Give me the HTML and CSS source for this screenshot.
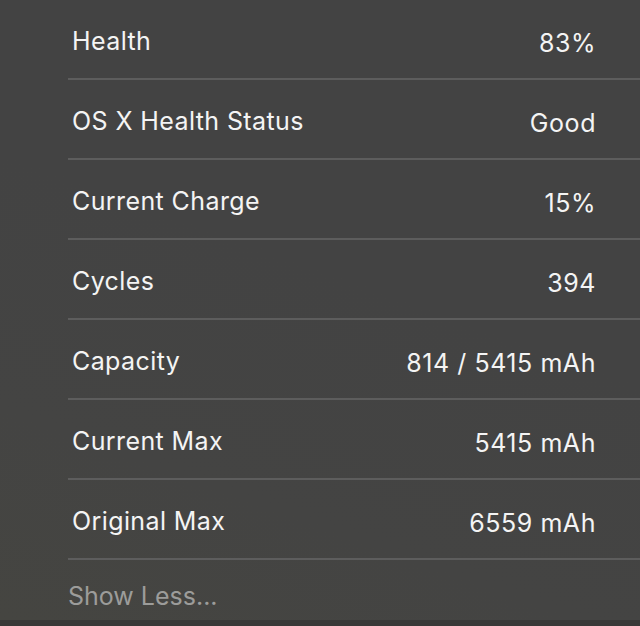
FILE: index.html
```html
<!DOCTYPE html>
<html>
<head>
	<title>Battery</title>
	<meta charset="utf-8">
	<link rel="stylesheet" href="styles.css">
</head>
<body>
	<div class="panel">
		<div class="list">
			<div class="row"><span class="label">Health</span><span class="value">83%</span></div>
			<div class="row"><span class="label">OS X Health Status</span><span class="value">Good</span></div>
			<div class="row"><span class="label">Current Charge</span><span class="value">15%</span></div>
			<div class="row"><span class="label">Cycles</span><span class="value">394</span></div>
			<div class="row"><span class="label">Capacity</span><span class="value">814 / 5415 mAh</span></div>
			<div class="row"><span class="label">Current Max</span><span class="value">5415 mAh</span></div>
			<div class="row"><span class="label">Original Max</span><span class="value">6559 mAh</span></div>
		</div>
		<a class="toggle">Show Less...</a>
	</div>
	<div class="footer"></div>
</body>
</html>
```

FILE: styles.css
```css
html, body {
	margin: 0;
	height: 100%;
}

body {
	background: #434343;
	font-family: "Inter", "Liberation Sans", sans-serif;
	color: #f4f4f4;
	display: flex;
	flex-direction: column;
	overflow: hidden;
}

.panel {
	flex: 1;
	padding-left: 68px;
	background: linear-gradient(20deg, #454541 0%, #444443 25%, #434343 55%);
}

.row {
	display: flex;
	justify-content: space-between;
	align-items: flex-start;
	height: 80px;
	box-sizing: border-box;
	padding: 26px 44px 0 4px;
	border-bottom: 2px solid #5d5d5d;
	font-size: 25px;
	line-height: 30px;
	letter-spacing: 0.4px;
}

.value {
	margin-top: 2px;
	letter-spacing: 0.55px;
}

.toggle {
	display: block;
	margin-top: 21px;
	font-size: 25px;
	line-height: 30px;
	color: #9c9c9a;
}

.footer {
	height: 6px;
	background: #393938;
}
```
